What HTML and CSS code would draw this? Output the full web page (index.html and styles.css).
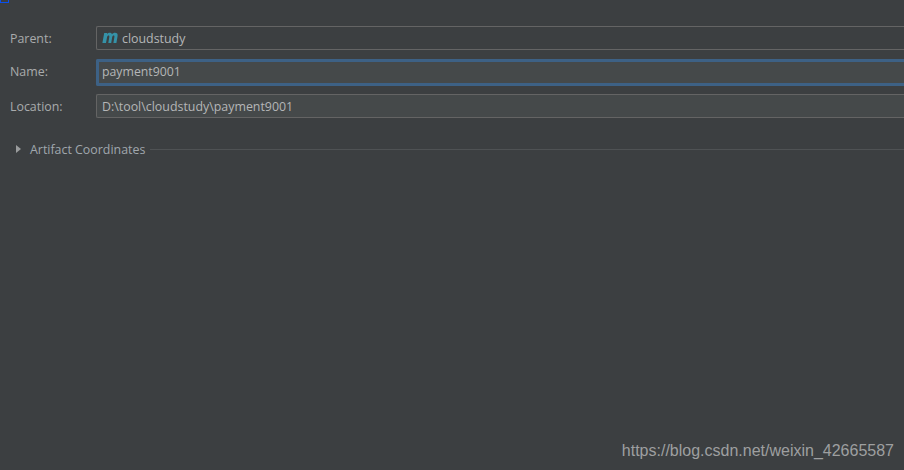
FILE: index.html
```html
<!DOCTYPE html>
<html lang="en">
<head>
  <meta charset="UTF-8" />
  <meta name="viewport" content="width=device-width, initial-scale=1.0" />
  <title>New Module</title>
  <link rel="stylesheet" href="styles.css">
</head>
<body>
  <div class="corner-mark"></div>

  <form class="module-form">
    <div class="form-row">
      <label class="form-label">Parent:</label>
      <div class="field field-parent">
        <svg class="maven-icon" width="16" height="12" viewBox="0 0 16 12">
          <path d="M0.4 11 L2.2 1 H5.2 L5 2.2 C5.8 1.2 6.8 0.8 7.8 0.8 C8.9 0.8 9.7 1.3 10 2.3 C10.8 1.3 11.8 0.8 13 0.8 C15 0.8 15.9 2 15.6 4 L14.4 11 H11.4 L12.4 5 C12.6 3.9 12.3 3.4 11.6 3.4 C10.9 3.4 10.4 4 10.2 5 L9.2 11 H6.3 L7.3 5 C7.5 3.9 7.2 3.4 6.5 3.4 C5.8 3.4 5.3 4 5.1 5 L4 11 Z" fill="#3592a8"/>
        </svg>
        <span>cloudstudy</span>
      </div>
    </div>
    <div class="form-row">
      <label class="form-label form-label-focus">Name:</label>
      <div class="field field-focus">payment9001</div>
    </div>
    <div class="form-row">
      <label class="form-label">Location:</label>
      <div class="field">D:\tool\cloudstudy\payment9001</div>
    </div>

    <div class="section-title">
      <span class="arrow"></span>
      <span class="section-name">Artifact Coordinates</span>
      <span class="section-line"></span>
    </div>
  </form>

  <div class="watermark">https://blog.csdn.net/weixin_42665587</div>
</body>
</html>
```

FILE: styles.css
```css
* {
  box-sizing: border-box;
}

html, body {
  height: 100%;
}

body {
  margin: 0;
  position: relative;
  overflow: hidden;
  background-color: #3c3f41;
  color: #b4b6b7;
  font-family: 'Open Sans', 'Noto Sans', sans-serif;
  font-size: 12.4px;
}

.corner-mark {
  width: 9px;
  height: 3px;
  border: 1px solid #0a50f0;
  border-top: none;
}

.module-form {
  padding-top: 18px;
}

.form-row {
  display: grid;
  grid-template-columns: 96px 1fr;
  align-items: center;
  height: 34px;
}

.form-label {
  padding-left: 10px;
  color: #a9abac;
}

.form-label-focus {
  padding-bottom: 2px;
}

.field {
  display: flex;
  align-items: center;
  height: 24px;
  padding-left: 5px;
  background-color: #45494a;
  border: 1px solid #646464;
  border-right: none;
  border-radius: 2px 0 0 2px;
  color: #b4b6b7;
}

.field-parent {
  gap: 4px;
  background-color: #3c3f41;
}

.field-focus {
  height: 27px;
  border: 3px solid #3d6185;
  border-right: none;
  padding-left: 3px;
  padding-bottom: 2px;
  font-size: 12.3px;
}

.maven-icon {
  flex: none;
}

.section-title {
  display: flex;
  align-items: center;
  height: 18px;
  margin-top: 17px;
  padding-left: 16px;
}

.arrow {
  width: 0;
  height: 0;
  border-left: 5px solid #9a9c9d;
  border-top: 4.5px solid transparent;
  border-bottom: 4.5px solid transparent;
}

.section-name {
  margin-left: 9px;
  color: #a0a7ad;
}

.section-line {
  flex: 1;
  height: 1px;
  margin-left: 5px;
  background-color: #4f5254;
}

.watermark {
  position: absolute;
  right: 10px;
  bottom: 10px;
  color: #9e9fa0;
  font-family: 'Liberation Sans', Arial, sans-serif;
  font-size: 16px;
}
```
